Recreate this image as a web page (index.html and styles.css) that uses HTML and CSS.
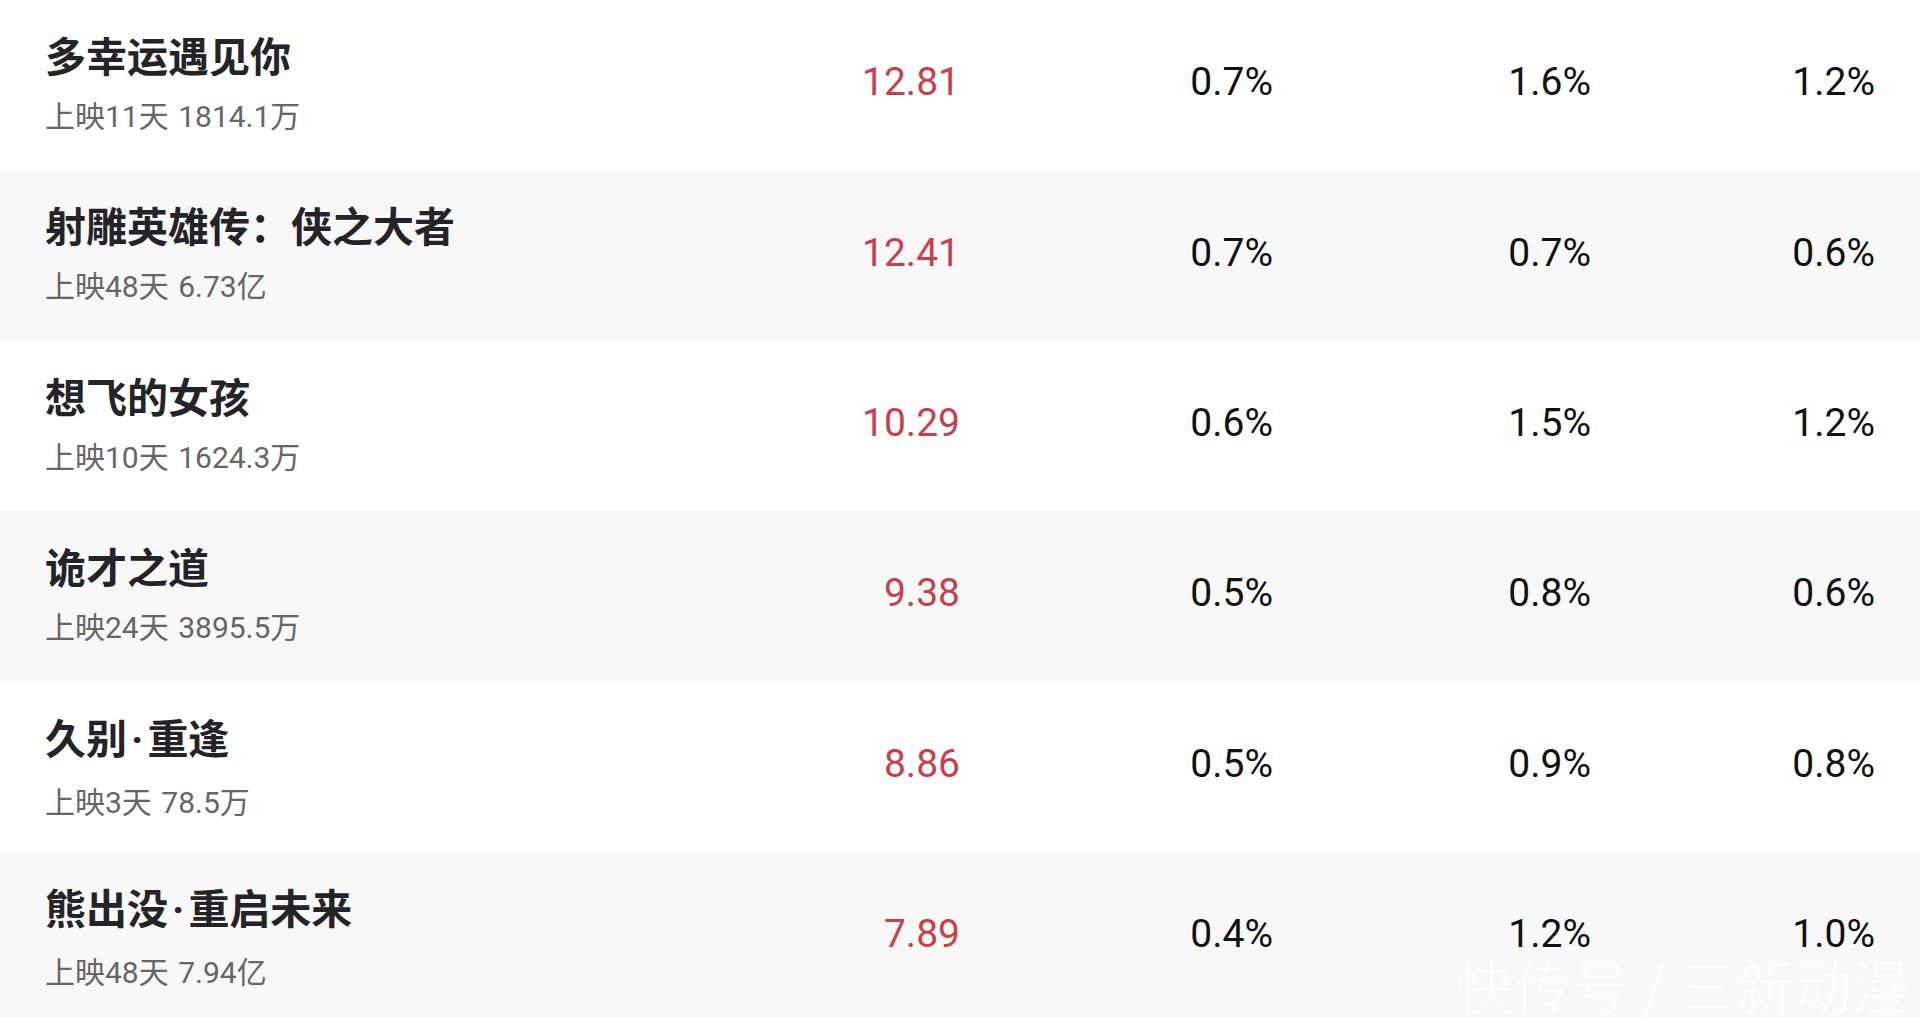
FILE: index.html
```html
<!DOCTYPE html>
<html lang="zh-CN">
<head>
<meta charset="utf-8">
<title>票房榜</title>
<link rel="stylesheet" href="styles.css">
</head>
<body>
<div class="list">
  <div class="row">
    <div class="name"><div class="title">多幸运遇见你</div><div class="sub">上映11天 1814.1万</div></div>
    <div class="num red">12.81</div>
    <div class="num">0.7%</div>
    <div class="num">1.6%</div>
    <div class="num">1.2%</div>
  </div>
  <div class="row alt">
    <div class="name"><div class="title">射雕英雄传：侠之大者</div><div class="sub">上映48天 6.73亿</div></div>
    <div class="num red">12.41</div>
    <div class="num">0.7%</div>
    <div class="num">0.7%</div>
    <div class="num">0.6%</div>
  </div>
  <div class="row">
    <div class="name"><div class="title">想飞的女孩</div><div class="sub">上映10天 1624.3万</div></div>
    <div class="num red">10.29</div>
    <div class="num">0.6%</div>
    <div class="num">1.5%</div>
    <div class="num">1.2%</div>
  </div>
  <div class="row alt">
    <div class="name"><div class="title">诡才之道</div><div class="sub">上映24天 3895.5万</div></div>
    <div class="num red">9.38</div>
    <div class="num">0.5%</div>
    <div class="num">0.8%</div>
    <div class="num">0.6%</div>
  </div>
  <div class="row">
    <div class="name"><div class="title">久别<span class="dot">·</span>重逢</div><div class="sub">上映3天 78.5万</div></div>
    <div class="num red">8.86</div>
    <div class="num">0.5%</div>
    <div class="num">0.9%</div>
    <div class="num">0.8%</div>
  </div>
  <div class="row alt">
    <div class="name"><div class="title">熊出没<span class="dot">·</span>重启未来</div><div class="sub">上映48天 7.94亿</div></div>
    <div class="num red">7.89</div>
    <div class="num">0.4%</div>
    <div class="num">1.2%</div>
    <div class="num">1.0%</div>
  </div>
</div>
<div class="watermark">快传号 / 三新动漫</div>
</body>
</html>
```

FILE: styles.css
```css
html, body {
  margin: 0;
  padding: 0;
  background: #ffffff;
}
body {
  width: 1920px;
  height: 1017px;
  overflow: hidden;
  position: relative;
  font-family: Roboto, "Noto Sans CJK SC", sans-serif;
}
.list {
  display: flex;
  flex-direction: column;
}
.row {
  height: 170.4px;
  box-sizing: border-box;
  padding: 0 45px;
  display: grid;
  grid-template-columns: 1fr 204px 313px 318px 284px;
  align-items: center;
  background: #ffffff;
}
.row.alt {
  background: #f8f8f8;
}
.name {
  align-self: start;
  padding-top: 30px;
}
.title {
  font-family: "Noto Sans CJK SC", sans-serif;
  font-weight: 700;
  font-size: 41px;
  line-height: 48px;
  color: #242428;
  white-space: nowrap;
}
.dot {
  font-family: Roboto, sans-serif;
  font-weight: 700;
  margin: 0 4px;
}
.sub {
  margin-top: 20px;
  font-size: 30px;
  line-height: 38px;
  color: #666666;
  white-space: nowrap;
  word-spacing: 2px;
}
.num {
  text-align: right;
  font-size: 39px;
  line-height: 40px;
  color: #111111;
  padding-bottom: 6px;
}
.num.red {
  color: #c8404b;
}
.watermark {
  position: absolute;
  right: 10px;
  bottom: 4px;
  font-family: "Noto Sans CJK SC", sans-serif;
  font-weight: 300;
  font-size: 58px;
  line-height: 58px;
  color: rgba(255, 255, 255, 0.75);
  white-space: pre;
}
```
